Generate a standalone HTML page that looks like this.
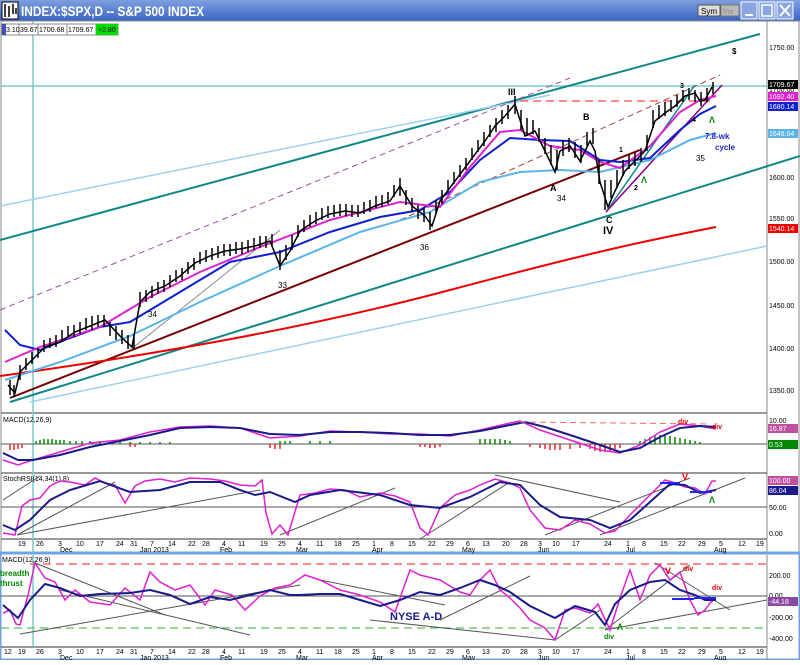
<!DOCTYPE html>
<html><head><meta charset="utf-8"><style>
body{margin:0;width:800px;height:660px;overflow:hidden;background:#fff;font-family:"Liberation Sans",sans-serif}
svg text{font-family:"Liberation Sans",sans-serif}
</style></head><body>
<svg width="800" height="660" viewBox="0 0 800 660" xmlns="http://www.w3.org/2000/svg">
<defs><linearGradient id="tb" x1="0" y1="0" x2="0" y2="1"><stop offset="0" stop-color="#7d9fe0"/><stop offset="1" stop-color="#3a64c4"/></linearGradient></defs>
<rect width="800" height="660" fill="#fff"/>
<!-- title bar -->
<rect x="0" y="0" width="800" height="21" fill="url(#tb)"/>
<rect x="2" y="2" width="16" height="17" fill="#fff" stroke="#000"/>
<path d="M5 4v13M9 6v11M13 4v10M16 8v6" stroke="#000" stroke-width="1.5"/>
<text x="21" y="16" font-size="14" font-weight="bold" fill="#fff" textLength="183" lengthAdjust="spacingAndGlyphs">INDEX:$SPX,D -- S&amp;P 500 INDEX</text>
<rect x="698" y="5" width="22" height="11" fill="#ddd" stroke="#555"/><text x="701" y="14" font-size="8">Sym</text>
<rect x="721" y="5" width="18" height="11" fill="#bbb" stroke="#777"/><text x="723" y="14" font-size="8" fill="#888">Inv</text>
<rect x="741" y="2" width="16" height="17" fill="#8aa6e0" stroke="#fff"/><path d="M745 15h8" stroke="#fff" stroke-width="2"/>
<rect x="759" y="2" width="16" height="17" fill="#8aa6e0" stroke="#fff"/><rect x="762" y="5" width="10" height="11" fill="none" stroke="#fff" stroke-width="1.5"/>
<rect x="777" y="2" width="16" height="17" fill="#8aa6e0" stroke="#fff"/><path d="M780 5l10 11M790 5l-10 11" stroke="#fff" stroke-width="2"/>
<!-- frame -->
<rect x="1" y="21" width="798" height="532" fill="none" stroke="#888"/>
<line x1="767" y1="21" x2="767" y2="553" stroke="#888"/>
<line x1="1" y1="413" x2="767" y2="413" stroke="#777" stroke-width="1.5"/>
<line x1="1" y1="473" x2="767" y2="473" stroke="#777" stroke-width="1.5"/>
<line x1="1" y1="539" x2="767" y2="539" stroke="#777" stroke-width="1.5"/>
<rect x="0" y="553" width="800" height="107" fill="#fff" stroke="#6fa3e0" stroke-width="3"/>
<line x1="1" y1="647" x2="767" y2="647" stroke="#777" stroke-width="1.5"/>
<line x1="767" y1="555" x2="767" y2="660" stroke="#888"/>
<!-- vertical teal -->
<line x1="33" y1="21" x2="33" y2="553" stroke="#7cc" stroke-width="1.5"/>
<line x1="33" y1="555" x2="33" y2="647" stroke="#7cc" stroke-width="1.5"/>
<line x1="1" y1="86" x2="767" y2="86" stroke="#7cc" stroke-width="1.5"/>
<!-- info box -->
<rect x="2" y="24" width="116" height="11" fill="#fff" stroke="#888"/>
<rect x="2" y="24" width="4" height="11" fill="#4050b0"/>
<path d="M19 24v11M38 24v11M67 24v11M96 24v11" stroke="#888"/>
<g font-size="7"><text x="6" y="32">3.10</text><text x="20" y="32">39.67</text><text x="39" y="32">1700.68</text><text x="68" y="32">1709.67</text></g>
<rect x="96" y="24" width="22" height="11" fill="#0d0"/>
<text x="98" y="32" font-size="7">+2.80</text>
<!-- channel lines -->
<line x1="0" y1="240" x2="760" y2="34" stroke="#188" stroke-width="2"/>
<line x1="0" y1="206" x2="550" y2="95" stroke="#9bd0f0" stroke-width="1.5"/>
<line x1="0" y1="310" x2="570" y2="78" stroke="#a050a0" stroke-dasharray="6,4"/>
<line x1="10" y1="402" x2="800" y2="156" stroke="#188" stroke-width="2"/>
<line x1="10" y1="398" x2="640" y2="150" stroke="#700" stroke-width="2"/>
<line x1="30" y1="402" x2="767" y2="246" stroke="#9bd0f0" stroke-width="1.5"/>
<path d="M0 376 C150 355 300 330 450 290 S650 240 716 227" fill="none" stroke="#e00" stroke-width="2"/>
<line x1="520" y1="101" x2="710" y2="101" stroke="#f66" stroke-width="1.5" stroke-dasharray="8,5"/>
<line x1="400" y1="220" x2="720" y2="75" stroke="#a04040" stroke-dasharray="6,4"/>
<line x1="606" y1="212" x2="695" y2="85" stroke="#188" stroke-width="1.5"/>
<line x1="606" y1="212" x2="722" y2="85" stroke="#808" stroke-width="1.5"/>
<line x1="130" y1="350" x2="280" y2="230" stroke="#888"/>
<!-- MAs -->
<polyline fill="none" stroke="#5ab4e8" stroke-width="2" points="5,380 60,362 130,336 200,302 280,266 360,232 430,212 480,182 520,172 560,170 600,172 650,160 690,140 716,133"/>
<polyline fill="none" stroke="#1020d0" stroke-width="2" points="5,330 20,345 40,350 70,338 100,327 130,322 180,292 230,262 280,252 330,232 380,217 420,210 450,192 480,160 510,138 540,140 570,141 600,160 620,162 650,158 680,130 700,114 716,106"/>
<polyline fill="none" stroke="#e020d0" stroke-width="2" points="5,362 40,347 100,327 150,297 200,272 260,247 330,220 400,202 440,207 470,167 500,132 520,130 550,146 580,150 600,162 620,168 650,146 680,112 700,100 716,96"/>
<!-- price -->
<polyline fill="none" stroke="#000" stroke-width="1.5" points="8,385 15,393 20,372 30,362 45,347 60,342 75,332 90,326 105,320 120,336 132,347 140,302 150,292 165,286 180,276 195,263 210,256 225,251 240,249 255,246 270,241 280,266 290,251 300,231 315,221 330,214 345,211 360,213 375,206 390,201 400,186 412,206 425,216 432,226 440,201 455,181 470,161 485,141 495,126 505,116 515,104 520,120 525,136 535,131 545,151 555,172 560,151 570,146 580,161 590,141 595,151 600,182 608,207 615,191 625,171 635,161 645,151 655,121 665,113 675,106 685,96 695,93 700,101 705,100 712,87"/>
<path d="M10 380v15M14 385v12M20 365v15M26 358v12M32 352v12M38 348v10M44 340v12M50 338v10M56 335v12M62 330v12M68 326v12M74 325v12M80 322v12M86 318v12M92 316v14M98 315v12M104 315v12M110 322v14M116 326v14M122 330v14M128 335v14M134 335v14M140 292v15M146 290v12M152 286v12M158 282v12M164 280v12M170 275v12M176 270v12M182 268v12M188 262v12M194 258v12M200 252v12M206 250v12M212 248v12M218 246v12M224 244v12M230 244v12M236 242v12M242 242v12M248 240v12M254 238v12M260 236v12M266 236v12M272 234v12M280 250v20M286 245v15M292 235v15M298 225v12M304 220v12M310 215v12M316 212v12M322 208v12M328 206v12M334 205v12M340 204v12M346 204v12M352 205v12M358 205v12M364 202v12M370 200v12M376 196v12M382 195v12M388 192v12M394 185v12M400 178v18M406 190v15M412 198v14M418 205v14M424 208v14M430 212v18M436 200v14M442 190v14M448 180v12M454 172v12M460 165v12M466 158v12M472 148v12M478 140v12M484 132v14M490 125v12M496 118v14M502 110v14M508 105v14M515 96v18M521 110v20M527 118v18M533 120v14M539 128v14M545 138v16M551 145v20M557 150v20M563 140v16M569 138v14M575 142v16M581 145v18M587 132v14M593 128v16M599 160v24M605 180v30M611 180v18M617 170v18M623 160v16M629 155v14M635 152v14M641 148v14M647 135v16M653 110v18M659 105v14M665 102v14M671 100v12M677 95v12M683 90v12M689 88v12M695 90v12M701 92v14M707 88v14M713 82v12" stroke="#000" stroke-width="1.5"/>
<!-- labels main -->
<g font-size="9" font-weight="bold" fill="#000">
<text x="508" y="95">III</text><text x="583" y="120">B</text><text x="550" y="191">A</text><text x="606" y="223">C</text>
<text x="603" y="234" font-size="11">IV</text><text x="680" y="88" font-size="7">3</text><text x="619" y="152" font-size="7">1</text><text x="634" y="190" font-size="7">2</text><text x="692" y="122" font-size="7">4</text><text x="732" y="54" font-size="8">$</text>
</g>
<g font-size="8" fill="#000"><text x="557" y="201">34</text><text x="420" y="250">36</text><text x="278" y="288">33</text><text x="148" y="317">34</text><text x="696" y="161">35</text></g>
<text x="705" y="139" font-size="8" fill="#22c" font-weight="bold">7.8-wk</text><text x="715" y="150" font-size="8" fill="#22c" font-weight="bold">cycle</text>
<text x="641" y="183" font-size="9" fill="#080" font-weight="bold">Λ</text><text x="709" y="123" font-size="9" fill="#080" font-weight="bold">Λ</text>
<!-- right axis main -->
<g font-size="7" fill="#000">
<text x="769" y="50">1750.00</text><text x="769" y="92">1700.00</text><text x="769" y="180">1600.00</text><text x="769" y="221">1550.00</text><text x="769" y="264">1500.00</text><text x="769" y="308">1450.00</text><text x="769" y="351">1400.00</text><text x="769" y="393">1350.00</text>
</g>
<rect x="768" y="80" width="30" height="9" fill="#000"/><text x="769" y="87" font-size="7" fill="#fff">1709.67</text>
<rect x="768" y="92" width="30" height="9" fill="#e020d0"/><text x="769" y="99" font-size="7" fill="#fff">1692.40</text>
<rect x="768" y="102" width="30" height="9" fill="#1020d0"/><text x="769" y="109" font-size="7" fill="#fff">1680.14</text>
<rect x="768" y="129" width="30" height="9" fill="#5ab4e8"/><text x="769" y="136" font-size="7" fill="#fff">1648.04</text>
<rect x="768" y="224" width="30" height="9" fill="#e00"/><text x="769" y="231" font-size="7" fill="#fff">1540.14</text>
<!-- MACD -->
<text x="3" y="422" font-size="7">MACD(12,26,9)</text>
<line x1="1" y1="444" x2="767" y2="444" stroke="#555"/>
<path d="M36 444v-3M40 444v-4M44 444v-5M48 444v-5M52 444v-5M56 444v-4M60 444v-4M64 444v-4M70 444v-3M76 444v-3M82 444v-3M90 444v-3M100 444v-3M110 444v-2M120 444v-2M130 444v-2M140 444v-2M150 444v-2M160 444v-2M170 444v-2M280 444v-3M285 444v-3M290 444v-3M310 444v-3M320 444v-3M330 444v-3M480 444v-5M485 444v-5M490 444v-5M495 444v-5M500 444v-5M505 444v-4M510 444v-3M640 444v-3M645 444v-5M650 444v-7M655 444v-8M660 444v-9M665 444v-9M670 444v-8M675 444v-7M680 444v-6M685 444v-5M690 444v-4M695 444v-3M700 444v-2" stroke="#080" stroke-width="1.5"/>
<path d="M10 444v6M14 444v6M18 444v5M22 444v4M130 444v3M135 444v3M270 444v4M275 444v5M280 444v5M420 444v3M425 444v3M430 444v4M435 444v4M440 444v3M530 444v3M540 444v4M545 444v5M550 444v6M555 444v6M560 444v6M570 444v5M580 444v4M590 444v5M595 444v7M600 444v8M605 444v8M610 444v7M615 444v5M620 444v4" stroke="#e22" stroke-width="1.5"/>
<polyline fill="none" stroke="#e020d0" stroke-width="1.5" points="3,460 18,465 33,460 60,452 90,443 120,440 150,432 180,427 210,426 240,428 270,438 300,436 330,431 360,432 390,434 420,434 450,436 480,430 510,423 520,421 540,430 570,440 600,450 620,453 640,445 660,432 680,424 700,426 716,429"/>
<polyline fill="none" stroke="#1a1a8a" stroke-width="2" points="3,453 18,460 33,460 60,455 90,447 120,441 150,435 180,428 210,427 240,428 270,434 300,435 330,432 360,432 390,433 420,435 450,435 480,431 510,425 525,422 545,427 570,435 600,445 620,452 640,448 660,437 680,428 700,426 716,427"/>
<line x1="520" y1="422" x2="710" y2="424" stroke="#f66" stroke-dasharray="6,4"/>
<text x="678" y="424" font-size="7" fill="#e00" font-weight="bold">div</text><text x="712" y="429" font-size="7" fill="#e00" font-weight="bold">div</text>
<text x="769" y="423" font-size="7">10.00</text>
<rect x="768" y="424" width="30" height="9" fill="#c050a0"/><text x="769" y="431" font-size="7" fill="#fff">16.87</text>
<rect x="768" y="440" width="30" height="9" fill="#080"/><text x="769" y="447" font-size="7" fill="#fff">0.53</text>
<!-- Stoch -->
<text x="3" y="481" font-size="7">StochRSI(14,34(1),8)</text>
<line x1="1" y1="507" x2="767" y2="507" stroke="#555"/>
<text x="769" y="510" font-size="7">50.00</text><text x="769" y="536" font-size="7">0.00</text>
<rect x="768" y="476" width="30" height="9" fill="#c050a0"/><text x="769" y="483" font-size="7" fill="#fff">100.00</text>
<rect x="768" y="486" width="30" height="9" fill="#1a1a8a"/><text x="769" y="493" font-size="7" fill="#fff">86.04</text>
<g stroke="#555" stroke-width="1"><line x1="3" y1="500" x2="40" y2="476"/><line x1="17" y1="535" x2="115" y2="482"/><line x1="17" y1="535" x2="260" y2="490"/><line x1="280" y1="535" x2="395" y2="488"/><line x1="420" y1="539" x2="510" y2="482"/><line x1="495" y1="475" x2="620" y2="502"/><line x1="545" y1="535" x2="690" y2="478"/><line x1="600" y1="535" x2="745" y2="478"/></g>
<polyline fill="none" stroke="#e020d0" stroke-width="1.5" points="3,533 15,535 22,506 30,500 40,498 50,486 60,481 70,482 85,485 95,478 105,483 115,485 125,503 135,486 145,481 160,479 175,482 190,478 210,479 225,481 240,485 255,486 262,480 266,513 272,534 280,525 288,535 300,495 315,493 330,489 345,490 360,497 380,493 395,496 410,502 420,528 428,535 440,508 455,495 470,490 480,485 495,479 510,483 520,488 530,510 545,528 560,530 575,520 590,524 605,533 615,531 630,515 645,500 655,490 665,480 675,483 685,487 695,488 705,494 712,481 716,481"/>
<polyline fill="none" stroke="#1a1a8a" stroke-width="2" points="3,525 15,530 30,520 50,500 70,490 100,481 130,492 160,490 190,482 220,482 240,490 255,495 270,492 295,502 310,495 340,490 380,495 410,505 440,508 470,497 500,482 520,485 540,505 560,517 590,520 610,528 630,520 650,502 670,484 685,485 700,493 716,490"/>
<path d="M660 483h20M690 492h22" stroke="#22f" stroke-width="2"/>
<text x="682" y="480" font-size="9" fill="#e00" font-weight="bold">V</text><text x="709" y="503" font-size="9" fill="#080" font-weight="bold">Λ</text>
<!-- date axes -->
<g font-size="7" fill="#000">
<text x="18" y="546">19</text><text x="36" y="546">26</text><text x="58" y="546">3</text><text x="76" y="546">10</text><text x="96" y="546">17</text><text x="116" y="546">24</text><text x="130" y="546">31</text><text x="150" y="546">7</text><text x="168" y="546">14</text><text x="188" y="546">22</text><text x="202" y="546">28</text><text x="222" y="546">4</text><text x="238" y="546">11</text><text x="260" y="546">19</text><text x="278" y="546">25</text><text x="298" y="546">4</text><text x="316" y="546">11</text><text x="334" y="546">18</text><text x="352" y="546">25</text><text x="372" y="546">1</text><text x="390" y="546">8</text><text x="408" y="546">15</text><text x="428" y="546">22</text><text x="446" y="546">29</text><text x="466" y="546">6</text><text x="482" y="546">13</text><text x="502" y="546">20</text><text x="520" y="546">28</text><text x="538" y="546">3</text><text x="552" y="546">10</text><text x="572" y="546">17</text><text x="604" y="546">24</text><text x="626" y="546">1</text><text x="642" y="546">8</text><text x="660" y="546">15</text><text x="678" y="546">22</text><text x="698" y="546">29</text><text x="719" y="546">5</text><text x="738" y="546">12</text><text x="756" y="546">19</text>
<text x="60" y="552">Dec</text><text x="140" y="552">Jan 2013</text><text x="220" y="552">Feb</text><text x="296" y="552">Mar</text><text x="372" y="552">Apr</text><text x="462" y="552">May</text><text x="538" y="552">Jun</text><text x="626" y="552">Jul</text><text x="714" y="552">Aug</text>
</g>
<g font-size="7" fill="#000">
<text x="4" y="654">12</text><text x="18" y="654">19</text><text x="36" y="654">26</text><text x="58" y="654">3</text><text x="76" y="654">10</text><text x="96" y="654">17</text><text x="116" y="654">24</text><text x="130" y="654">31</text><text x="150" y="654">7</text><text x="168" y="654">14</text><text x="188" y="654">22</text><text x="202" y="654">28</text><text x="222" y="654">4</text><text x="238" y="654">11</text><text x="260" y="654">19</text><text x="278" y="654">25</text><text x="298" y="654">4</text><text x="316" y="654">11</text><text x="334" y="654">18</text><text x="352" y="654">25</text><text x="372" y="654">1</text><text x="390" y="654">8</text><text x="408" y="654">15</text><text x="428" y="654">22</text><text x="446" y="654">29</text><text x="466" y="654">6</text><text x="482" y="654">13</text><text x="502" y="654">20</text><text x="520" y="654">28</text><text x="538" y="654">3</text><text x="552" y="654">10</text><text x="572" y="654">17</text><text x="604" y="654">24</text><text x="626" y="654">1</text><text x="642" y="654">8</text><text x="660" y="654">15</text><text x="678" y="654">22</text><text x="698" y="654">29</text><text x="719" y="654">5</text><text x="738" y="654">12</text><text x="756" y="654">19</text>
<text x="60" y="660">Dec</text><text x="140" y="660">Jan 2013</text><text x="220" y="660">Feb</text><text x="296" y="660">Mar</text><text x="372" y="660">Apr</text><text x="462" y="660">May</text><text x="538" y="660">Jun</text><text x="626" y="660">Jul</text><text x="714" y="660">Aug</text>
</g>
<!-- bottom panel -->
<text x="2" y="562" font-size="7">MACD(12,26,9)</text>
<text x="0" y="576" font-size="8" fill="#080" font-weight="bold">breadth</text><text x="0" y="586" font-size="8" fill="#080" font-weight="bold">thrust</text>
<line x1="1" y1="596" x2="767" y2="596" stroke="#555"/>
<line x1="30" y1="564" x2="767" y2="564" stroke="#f66" stroke-width="1.5" stroke-dasharray="8,5"/>
<line x1="1" y1="628" x2="767" y2="628" stroke="#7c7" stroke-width="1.5" stroke-dasharray="8,5"/>
<g stroke="#555"><line x1="35" y1="563" x2="165" y2="615"/><line x1="20" y1="634" x2="300" y2="585"/><line x1="60" y1="590" x2="250" y2="635"/><line x1="320" y1="580" x2="445" y2="605"/><line x1="370" y1="620" x2="555" y2="640"/><line x1="440" y1="620" x2="530" y2="576"/><line x1="555" y1="640" x2="600" y2="610"/><line x1="605" y1="630" x2="690" y2="565"/><line x1="605" y1="630" x2="767" y2="600"/><line x1="655" y1="563" x2="730" y2="610"/></g>
<polyline fill="none" stroke="#e020d0" stroke-width="1.5" points="3,613 10,610 16,624 20,625 28,595 35,563 45,578 55,582 65,600 75,590 90,602 110,605 125,588 140,600 150,572 160,582 175,590 190,585 205,605 215,590 232,595 245,610 260,596 275,588 290,585 305,575 320,580 340,590 360,595 380,602 395,612 410,570 420,575 440,580 460,592 470,595 480,580 490,570 500,590 510,598 520,608 530,620 545,628 555,640 565,610 575,608 590,613 598,604 610,630 620,598 630,570 640,600 650,575 660,565 670,580 680,572 690,600 698,615 705,610 710,603 716,598"/>
<polyline fill="none" stroke="#1a1a8a" stroke-width="2" points="3,605 18,618 30,600 45,584 60,588 80,596 100,594 130,593 150,590 170,595 190,604 210,597 230,600 250,595 270,590 290,595 300,595 320,594 340,594 360,600 380,606 400,600 420,592 440,595 460,588 480,580 495,585 510,592 530,606 555,618 575,606 595,612 605,625 615,604 630,590 650,582 665,580 680,590 695,595 705,600 716,600"/>
<text x="390" y="620" font-size="11" font-weight="bold" fill="#1a1a8a">NYSE A-D</text>
<path d="M672 599h22M694 598h22" stroke="#22f" stroke-width="2"/>
<text x="665" y="574" font-size="9" fill="#e00" font-weight="bold">V</text><text x="683" y="571" font-size="7" fill="#e00" font-weight="bold">div</text><text x="712" y="590" font-size="7" fill="#e00" font-weight="bold">div</text>
<text x="604" y="639" font-size="7" fill="#080" font-weight="bold">div</text><text x="617" y="630" font-size="9" fill="#080" font-weight="bold">Λ</text>
<g font-size="7"><text x="769" y="578">200.00</text><text x="769" y="598">0.00</text><text x="769" y="620">-200.00</text><text x="769" y="641">-400.00</text></g>
<rect x="768" y="597" width="30" height="9" fill="#8a4aa0"/><text x="769" y="604" font-size="7" fill="#fff">-44.18</text>
</svg>
</body></html>
